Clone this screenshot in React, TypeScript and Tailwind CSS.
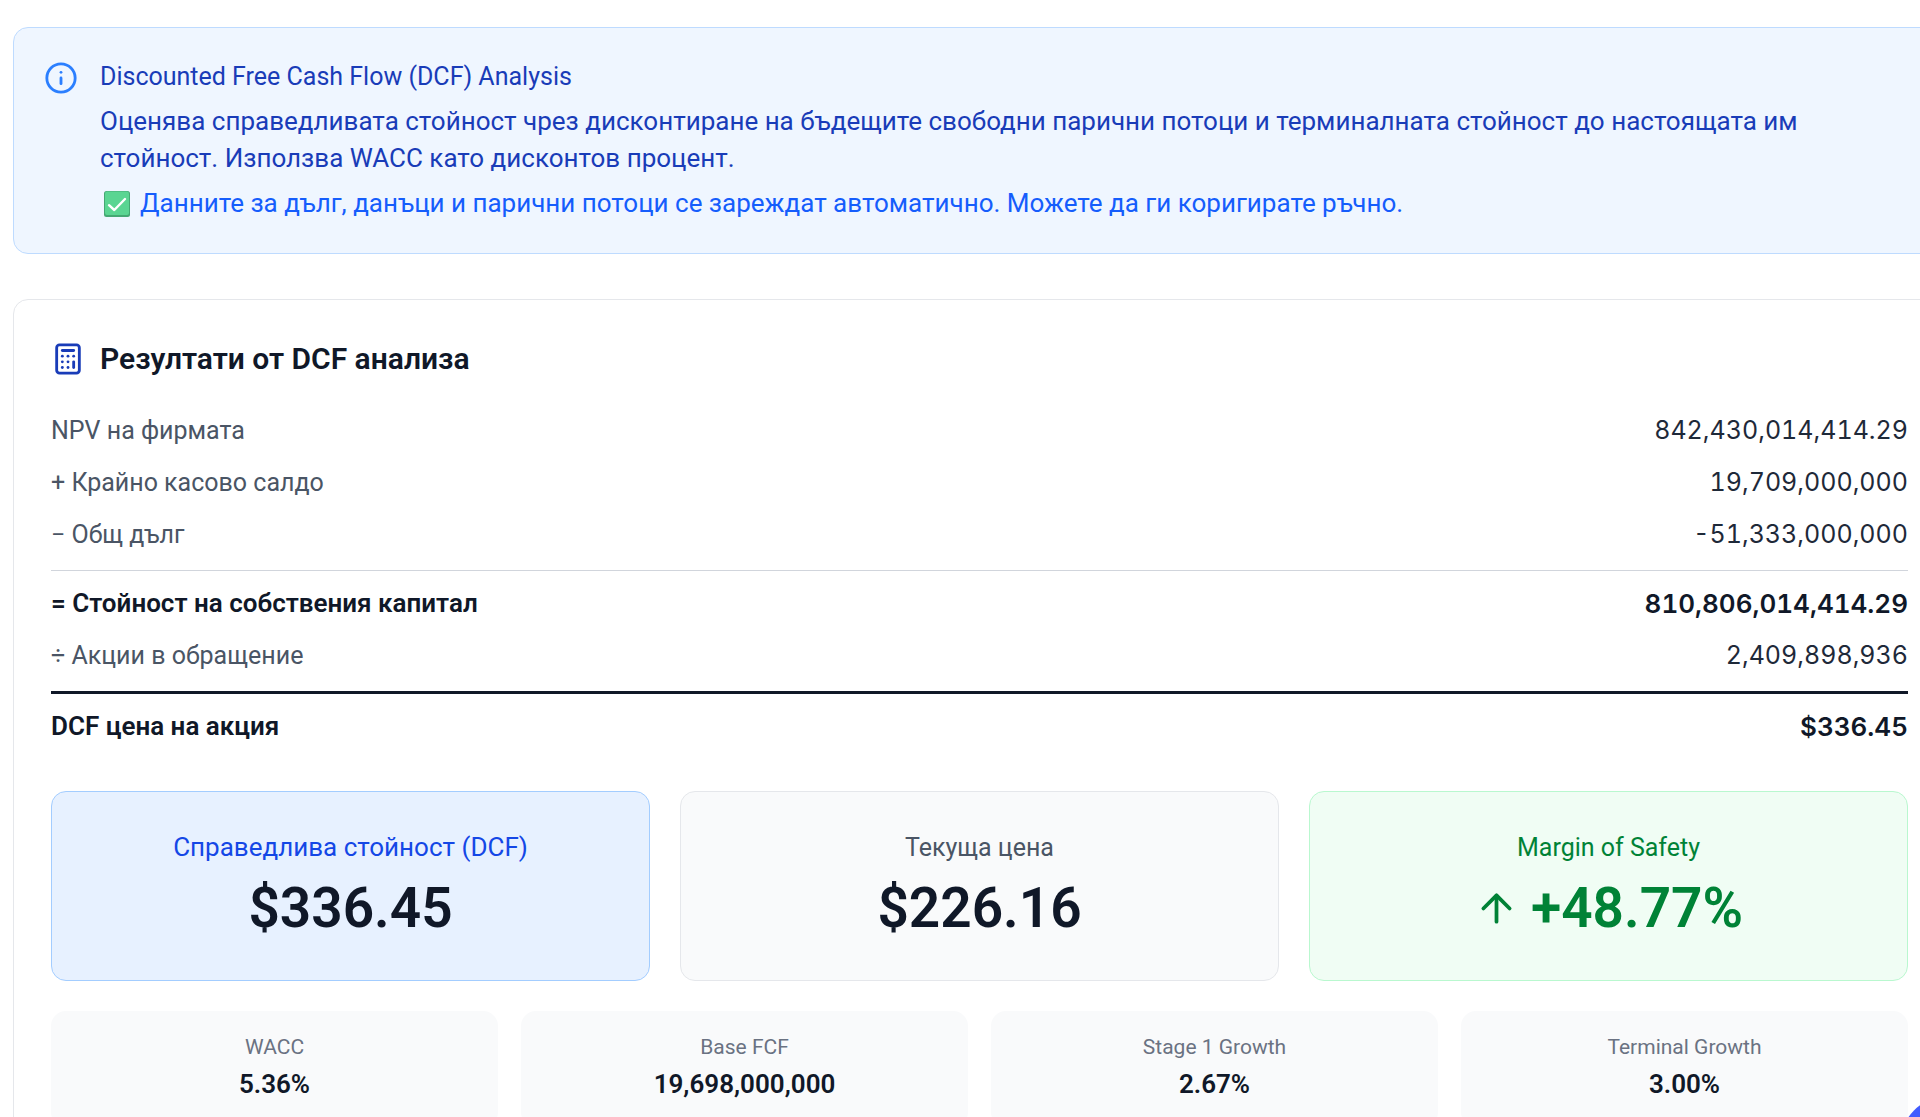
import { ArrowUp, Calculator, Info } from 'lucide-react';

type Row = { label: string; value: string; kind: 'plain' | 'subtotal' | 'total' };

const rows: Row[] = [
  { label: 'NPV на фирмата', value: '842,430,014,414.29', kind: 'plain' },
  { label: '+ Крайно касово салдо', value: '19,709,000,000', kind: 'plain' },
  { label: '− Общ дълг', value: '-51,333,000,000', kind: 'plain' },
  { label: '= Стойност на собствения капитал', value: '810,806,014,414.29', kind: 'subtotal' },
  { label: '÷ Акции в обращение', value: '2,409,898,936', kind: 'plain' },
  { label: 'DCF цена на акция', value: '$336.45', kind: 'total' },
];

const rowStyle = {
  plain: '',
  subtotal: 'mt-2.5 border-t border-gray-300 pt-1.5',
  total: 'mt-2.5 border-t-3 border-gray-900 pt-1.5',
};

const metrics = [
  { label: 'WACC', value: '5.36%' },
  { label: 'Base FCF', value: '19,698,000,000' },
  { label: 'Stage 1 Growth', value: '2.67%' },
  { label: 'Terminal Growth', value: '3.00%' },
];

function CheckBadge() {
  return (
    <svg viewBox="0 0 26 26" className="ml-1 size-[26px] shrink-0" aria-hidden="true">
      <rect width="26" height="26" rx="2.5" fill="#44a873" />
      <rect x="1" y="0.5" width="24" height="23.5" rx="2" fill="#5ad592" />
      <path d="M5 14.2 10.3 19 21 8" fill="none" stroke="#fff" strokeWidth="2.4" strokeLinecap="round" strokeLinejoin="round" />
    </svg>
  );
}

function InfoBanner() {
  return (
    <section className="flex gap-[22px] rounded-[15px] border border-blue-200 bg-blue-50 px-[30px] pt-[30px] pb-[31px]">
      <Info className="mt-[3px] size-[34px] shrink-0 text-blue-500" />
      <div className="flex flex-col gap-2 text-[26px] leading-[37px] text-blue-800">
        <h2 className="text-[25px]">Discounted Free Cash Flow (DCF) Analysis</h2>
        <p className="max-w-[1780px]">
          Оценява справедливата стойност чрез дисконтиране на бъдещите свободни парични потоци и терминалната стойност до настоящата им стойност. Използва WACC като дисконтов процент.
        </p>
        <p className="flex items-center gap-2.5 text-blue-600">
          <CheckBadge />
          Данните за дълг, данъци и парични потоци се зареждат автоматично. Можете да ги коригирате ръчно.
        </p>
      </div>
    </section>
  );
}

function ResultRow({ label, value, kind }: Row) {
  const strong = kind !== 'plain';
  return (
    <div className={rowStyle[kind]}>
      <div className="flex items-center justify-between pt-2 pb-[7px] leading-[37px]">
        <dt className={strong ? 'text-[26px] font-semibold text-gray-900' : 'text-[25px] text-gray-600'}>{label}</dt>
        <dd className={strong ? 'font-[Inter,sans-serif] text-[26px] font-semibold tabular-nums text-gray-900' : 'font-[Inter,sans-serif] text-[25px] tabular-nums text-gray-800'}>
          {value}
        </dd>
      </div>
    </div>
  );
}

export default function App() {
  return (
    <div lang="bg" className="relative h-screen overflow-hidden bg-white font-[Roboto,sans-serif]">
      <main className="-mr-[26px] ml-[13px] flex flex-col gap-[45px] pt-[27px]">
        <InfoBanner />

        <section className="rounded-[15px] border border-gray-200 bg-white px-[37px] pt-[38px] pb-[37px]">
          <div className="mb-6 flex items-center gap-[15px]">
            <Calculator className="size-[34px] text-blue-800" />
            <h2 className="text-[30px] leading-[42px] font-semibold text-gray-900">Резултати от DCF анализа</h2>
          </div>

          <dl>
            {rows.map((row) => (
              <ResultRow key={row.label} {...row} />
            ))}
          </dl>

          <div className="mt-[39px] grid grid-cols-3 gap-[30px] text-center">
            <div className="rounded-[15px] border border-[#a3cdff] bg-[#e7f1ff] pt-[37px] pb-[37px]">
              <p className="text-[26px] leading-[37px] text-blue-700">Справедлива стойност (DCF)</p>
              <p className="mt-2 text-[55px] leading-[69px] font-semibold text-gray-900">$336.45</p>
            </div>
            <div className="rounded-[15px] border border-gray-200 bg-gray-50 pt-[37px] pb-[37px]">
              <p className="text-[25px] leading-[37px] text-gray-600">Текуща цена</p>
              <p className="mt-2 text-[55px] leading-[69px] font-semibold text-gray-900">$226.16</p>
            </div>
            <div className="rounded-[15px] border border-green-200 bg-green-50 pt-[37px] pb-[37px] text-green-700">
              <p className="text-[25px] leading-[37px]">Margin of Safety</p>
              <p className="mt-2 flex items-center justify-center gap-3 text-[55px] leading-[69px] font-semibold">
                <ArrowUp className="size-[45px]" />
                +48.77%
              </p>
            </div>
          </div>

          <div className="mt-[30px] grid grid-cols-4 gap-[23px] text-center">
            {metrics.map((metric) => (
              <div key={metric.label} className="rounded-[15px] bg-gray-50 px-4 pt-[21px] pb-6">
                <p className="text-[21px] leading-[30px] text-gray-500">{metric.label}</p>
                <p className="mt-1 text-[26px] leading-[37px] font-semibold text-gray-900">{metric.value}</p>
              </div>
            ))}
          </div>
        </section>
      </main>

      <button type="button" aria-label="Помощ" className="absolute -right-[71px] -bottom-[70px] size-[90px] rounded-full bg-[#425cff]" />
    </div>
  );
}
